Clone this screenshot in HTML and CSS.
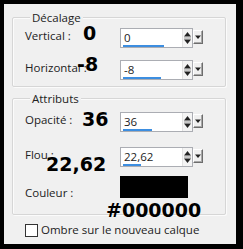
FILE: index.html
```html
<!DOCTYPE html>
<html lang="fr">
<head>
<meta charset="utf-8">
<title>Ombre portée</title>
<link rel="stylesheet" href="styles.css">
</head>
<body>
<div class="screen">
  <div class="panel">
    <div class="group g1">
      <div class="legend">Décalage</div>
      <div class="rows">
        <div class="label">Vertical :</div>
        <div class="field">
          <div class="edit">
            <div class="main"><span class="val">0</span><span class="bar" style="width:41px"></span></div>
            <span class="spin"><svg width="9" height="14" viewBox="0 0 9 14"><path d="M4.5 1 L8 5.5 L1 5.5 Z" fill="#222"/><path d="M1 7 H8" stroke="#9a9a9a" stroke-width="1"/><path d="M1 8.5 L8 8.5 L4.5 13 Z" fill="#222"/></svg></span>
          </div>
          <span class="drop"><svg width="8" height="12" viewBox="0 0 8 12"><path d="M1 4.5 L7 4.5 L4 8 Z" fill="#222"/></svg></span>
        </div>
        <div class="label">Horizontal :</div>
        <div class="field">
          <div class="edit">
            <div class="main"><span class="val">-8</span><span class="bar" style="width:38px"></span></div>
            <span class="spin"><svg width="9" height="14" viewBox="0 0 9 14"><path d="M4.5 1 L8 5.5 L1 5.5 Z" fill="#222"/><path d="M1 7 H8" stroke="#9a9a9a" stroke-width="1"/><path d="M1 8.5 L8 8.5 L4.5 13 Z" fill="#222"/></svg></span>
          </div>
          <span class="drop"><svg width="8" height="12" viewBox="0 0 8 12"><path d="M1 4.5 L7 4.5 L4 8 Z" fill="#222"/></svg></span>
        </div>
      </div>
    </div>
    <div class="group g2">
      <div class="legend">Attributs</div>
      <div class="rows">
        <div class="label">Opacité :</div>
        <div class="field">
          <div class="edit">
            <div class="main"><span class="val">36</span><span class="bar" style="width:29px"></span></div>
            <span class="spin"><svg width="9" height="14" viewBox="0 0 9 14"><path d="M4.5 1 L8 5.5 L1 5.5 Z" fill="#222"/><path d="M1 7 H8" stroke="#9a9a9a" stroke-width="1"/><path d="M1 8.5 L8 8.5 L4.5 13 Z" fill="#222"/></svg></span>
          </div>
          <span class="drop"><svg width="8" height="12" viewBox="0 0 8 12"><path d="M1 4.5 L7 4.5 L4 8 Z" fill="#222"/></svg></span>
        </div>
        <div class="label">Flou :</div>
        <div class="field">
          <div class="edit">
            <div class="main"><span class="val">22,62</span><span class="bar" style="width:18px"></span></div>
            <span class="spin"><svg width="9" height="14" viewBox="0 0 9 14"><path d="M4.5 1 L8 5.5 L1 5.5 Z" fill="#222"/><path d="M1 7 H8" stroke="#9a9a9a" stroke-width="1"/><path d="M1 8.5 L8 8.5 L4.5 13 Z" fill="#222"/></svg></span>
          </div>
          <span class="drop"><svg width="8" height="12" viewBox="0 0 8 12"><path d="M1 4.5 L7 4.5 L4 8 Z" fill="#222"/></svg></span>
        </div>
        <div class="label color-label">Couleur :</div>
        <div class="swatch"></div>
      </div>
    </div>
    <div class="check"><span class="box"></span><span class="check-text">Ombre sur le nouveau calque</span></div>
  </div>
  <div class="ann ann-v">0</div>
  <div class="ann ann-h">-8</div>
  <div class="ann ann-o">36</div>
  <div class="ann ann-f">22,62</div>
  <div class="ann ann-c">#000000</div>
</div>
</body>
</html>
```
FILE: styles.css
```css
* { box-sizing: border-box; }
html, body {
  margin: 0;
  padding: 0;
  background: #000;
}
body {
  width: 243px;
  height: 249px;
  overflow: hidden;
  font-family: "Open Sans", "DejaVu Sans", sans-serif;
  font-size: 11.5px;
  color: #222;
}
.screen {
  position: relative;
  width: 243px;
  height: 249px;
  padding: 4px 7px 5px 4px;
}
.panel {
  width: 232px;
  height: 240px;
  background: #f0f0f0;
  padding: 13px 10px 0 8px;
}
.group {
  border: 1px solid #d6d6d6;
  border-radius: 2px;
  box-shadow: inset 1px 1px 0 #fbfbfb, 1px 1px 0 #fbfbfb;
  padding: 0 0 6px 12px;
}
.g2 { margin-top: 11px; padding-bottom: 14px; }
.legend {
  display: table;
  margin: -7px 0 0 5px;
  padding: 0 2px;
  background: #f0f0f0;
  line-height: 14px;
  height: 14px;
}
.rows {
  display: grid;
  grid-template-columns: 95px auto;
  align-items: start;
  row-gap: 12px;
  margin-top: 3px;
}
.g2 .rows { margin-top: 6px; row-gap: 15px; }
.g2 .rows .color-label { margin-top: 3px; }
.g2 .swatch { margin-top: -6px; }
.label {
  line-height: 14px;
  padding-top: 1px;
  white-space: nowrap;
}
.field {
  display: flex;
  align-items: flex-start;
}
.edit {
  display: flex;
  width: 73px;
  height: 20px;
  border: 1px solid #abadb3;
  background: #fff;
}
.main {
  flex: 1;
  display: flex;
  flex-direction: column;
  padding-left: 2px;
}
.val {
  line-height: 14px;
  padding-top: 2px;
  padding-left: 1px;
}
.bar {
  display: block;
  margin-top: auto;
  height: 3px;
  background: #3d8ee0;
}
.spin {
  width: 10px;
  display: flex;
  align-items: center;
  justify-content: center;
  background: #f4f4f4;
  border-left: 1px solid #e2e2e2;
}
.spin svg { display: block; }
.drop {
  width: 10px;
  height: 14px;
  margin-top: 2px;
  background: #f0f0f0;
  border-top: 1px solid #fff;
  border-left: 1px solid #fff;
  border-right: 1px solid #6d6d6d;
  border-bottom: 1px solid #6d6d6d;
  box-shadow: inset -1px -1px 0 #a8a8a8;
  display: flex;
  justify-content: center;
}
.drop svg { display: block; }
.swatch {
  width: 68px;
  height: 22px;
  background: #000;
}
.check {
  display: flex;
  align-items: center;
  margin-top: 8px;
  padding-left: 13px;
}
.box {
  width: 13px;
  height: 13px;
  border: 1px solid #333;
  background: #fff;
  margin-right: 3px;
}
.check-text { line-height: 14px; }
.ann {
  position: absolute;
  font-family: "DejaVu Sans", sans-serif;
  font-weight: bold;
  font-size: 19px;
  line-height: 19px;
  color: #000;
  white-space: nowrap;
}
.ann-v { left: 83px; top: 24px; }
.ann-h { left: 77px; top: 55px; }
.ann-o { left: 82px; top: 110px; }
.ann-f { left: 46px; top: 155px; }
.ann-c { left: 106px; top: 201px; }
```
